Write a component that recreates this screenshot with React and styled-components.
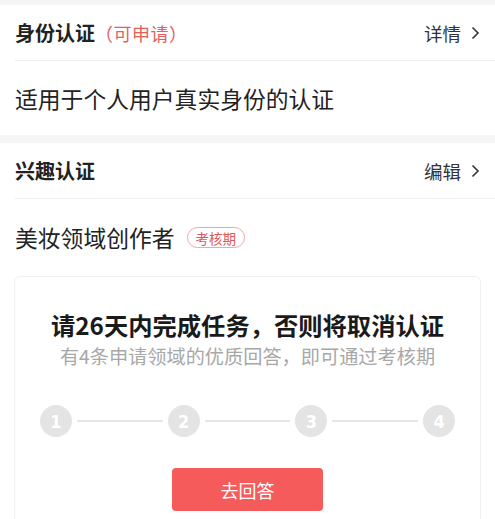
import styled, { createGlobalStyle } from "styled-components";

const Global = createGlobalStyle`
  html, body {
    margin: 0;
    padding: 0;
    background: #f5f5f5;
    font-family: "Noto Sans CJK SC", "Noto Sans", sans-serif;
    color: #222;
  }
`;

const Page = styled.div`
  padding-top: 5px;
  background: #f5f5f5;
  height: 519px;
  overflow: hidden;
`;

const Section = styled.section`
  background: #fff;
  margin-bottom: ${(p) => p.gap || 0}px;
`;

const Header = styled.div`
  display: flex;
  align-items: center;
  justify-content: space-between;
  height: 55px;
  margin-left: 15px;
  padding-right: 15px;
  border-bottom: 1px solid #eeeeee;
`;

const Title = styled.div`
  font-size: 20px;
  font-weight: 700;
  color: #222;
  display: flex;
  align-items: center;
`;

const Hint = styled.span`
  font-size: 18px;
  font-weight: 400;
  color: #e5605a;
  letter-spacing: 0.5px;
`;

const Action = styled.div`
  display: flex;
  align-items: center;
  gap: 10px;
  font-size: 18.5px;
  color: #333;
`;

const Body = styled.div`
  display: flex;
  align-items: center;
  height: ${(p) => p.h}px;
  padding: 0 15px;
  font-size: 22.8px;
  color: #222;
`;

const Badge = styled.span`
  display: inline-flex;
  align-items: center;
  justify-content: center;
  height: 19px;
  padding: 0 8px;
  margin-left: 12px;
  border: 1px solid #f0a6a6;
  border-radius: 11px;
  font-size: 13.5px;
  color: #e25555;
`;

const CardWrap = styled.div`
  padding: 0 14px;
`;

const Card = styled.div`
  border: 1px solid #f0f0f0;
  border-radius: 6px;
  padding: 33px 25px 40px;
  display: flex;
  flex-direction: column;
  align-items: center;
`;

const CardTitle = styled.div`
  font-size: 24.3px;
  font-weight: 700;
  color: #1a1a1a;
  line-height: 30px;
`;

const CardSub = styled.div`
  margin-top: 3px;
  font-size: 19.2px;
  color: #a8a8a8;
  line-height: 26px;
`;

const Steps = styled.div`
  align-self: stretch;
  display: flex;
  align-items: center;
  margin-top: 36px;
`;

const Dot = styled.div`
  width: 32px;
  height: 32px;
  border-radius: 50%;
  background: #e4e4e4;
  color: #fff;
  display: flex;
  align-items: center;
  justify-content: center;
  font-family: "DejaVu Sans Condensed", "Roboto", sans-serif;
  font-size: 18px;
  font-weight: 700;
  flex-shrink: 0;
`;

const Line = styled.div`
  flex: 1;
  height: 2px;
  background: #e6e6e6;
  margin: 0 5px;
`;

const Button = styled.button`
  margin-top: 31px;
  width: 151px;
  height: 43px;
  border: none;
  border-radius: 4px;
  background: #f65b5b;
  color: #fff;
  font-family: inherit;
  font-size: 18px;
`;

function Chevron() {
  return (
    <svg width="9" height="14" viewBox="0 0 9 14">
      <polyline
        points="1.5,1.5 7,7 1.5,12.5"
        fill="none"
        stroke="#333"
        strokeWidth="1.6"
      />
    </svg>
  );
}

export default function App() {
  return (
    <Page>
      <Global />
      <Section gap={8}>
        <Header>
          <Title>
            身份认证<Hint>（可申请）</Hint>
          </Title>
          <Action>
            详情
            <Chevron />
          </Action>
        </Header>
        <Body h={74}>适用于个人用户真实身份的认证</Body>
      </Section>
      <Section>
        <Header>
          <Title>兴趣认证</Title>
          <Action>
            编辑
            <Chevron />
          </Action>
        </Header>
        <Body h={77}>
          美妆领域创作者<Badge>考核期</Badge>
        </Body>
        <CardWrap>
          <Card>
            <CardTitle>请26天内完成任务，否则将取消认证</CardTitle>
            <CardSub>有4条申请领域的优质回答，即可通过考核期</CardSub>
            <Steps>
              <Dot>1</Dot>
              <Line />
              <Dot>2</Dot>
              <Line />
              <Dot>3</Dot>
              <Line />
              <Dot>4</Dot>
            </Steps>
            <Button>去回答</Button>
          </Card>
        </CardWrap>
      </Section>
    </Page>
  );
}
